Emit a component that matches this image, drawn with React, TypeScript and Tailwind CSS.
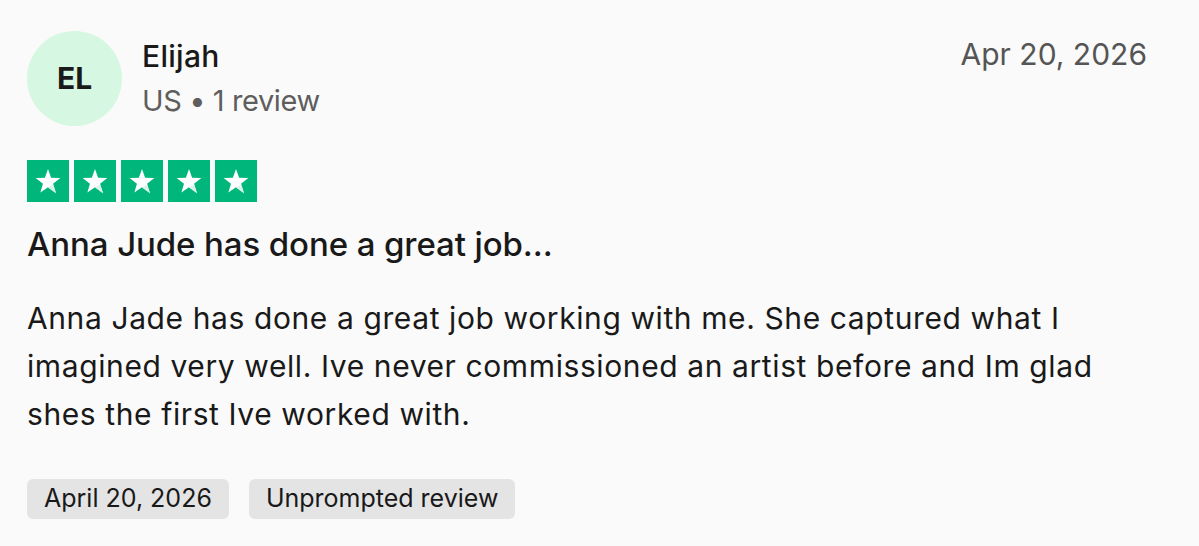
const FONT = "font-['Inter','Liberation_Sans',sans-serif]"

function Star() {
  // 5-point star, R=13, r=5.3, centred in a 42px box
  const pts: string[] = []
  for (let i = 0; i < 10; i++) {
    const r = i % 2 === 0 ? 13 : 5.3
    const a = -Math.PI / 2 + (i * Math.PI) / 5
    pts.push(`${(21 + r * Math.cos(a)).toFixed(2)},${(22 + r * Math.sin(a)).toFixed(2)}`)
  }
  return (
    <div className="h-[42px] w-[42px] bg-[#00b67a]">
      <svg width="42" height="42" viewBox="0 0 42 42">
        <polygon points={pts.join(' ')} fill="#ffffff" />
        <path d="M26.2 24.6 L29.2 33.5 L21 27.4 Z" fill="#dcf3e9" />
      </svg>
    </div>
  )
}

export default function App() {
  return (
    <div className={`min-h-[546px] w-full bg-[#fafafa] pl-[27px] pr-[52px] pt-[31px] text-[#191919] ${FONT}`}>
      <div className="flex items-start">
        <div className="flex h-[95px] w-[95px] shrink-0 items-center justify-center rounded-full bg-[#d6f7e1] text-[30px] font-bold text-[#1a1a1a]">
          EL
        </div>
        <div className="ml-[20px] flex flex-col pt-[6px]">
          <span className="text-[30px] font-medium leading-[38px] tracking-[0.3px]">Elijah</span>
          <span className="mt-[8px] text-[29px] leading-[36px] tracking-[-0.4px] text-[#5e5e5e]">US • 1 review</span>
        </div>
        <span className="ml-auto pt-[4px] text-[30px] leading-[38px] text-[#555555]">Apr 20, 2026</span>
      </div>

      <div className="mt-[34px] flex gap-[5px]">
        <Star />
        <Star />
        <Star />
        <Star />
        <Star />
      </div>

      <h2 className="mt-[22px] text-[33px] font-medium leading-[40px] tracking-[-0.1px]">
        Anna Jude has done a great job...
      </h2>

      <p className="mt-[30px] max-w-[1090px] text-[30px] leading-[48px] tracking-[0.6px]">
        Anna Jade has done a great job working with me. She captured what I imagined very well. Ive never
        commissioned an artist before and Im glad shes the first Ive worked with.
      </p>

      <div className="mt-[41px] flex gap-[20px] text-[25px]">
        <span className="flex h-[40px] items-center rounded-[6px] bg-[#e4e4e4] px-[17px]">April 20, 2026</span>
        <span className="flex h-[40px] items-center rounded-[6px] bg-[#e4e4e4] px-[17px]">Unprompted review</span>
      </div>
    </div>
  )
}
